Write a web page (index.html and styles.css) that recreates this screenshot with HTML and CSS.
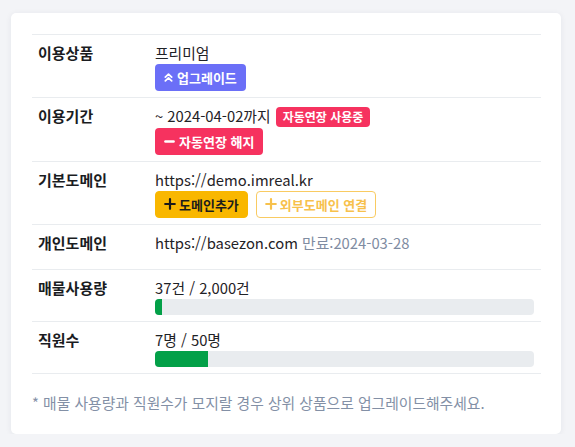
FILE: index.html
```html
<!DOCTYPE html>
<html lang="ko">
<head>
<meta charset="utf-8">
<link rel="stylesheet" href="styles.css">
</head>
<body>
<div class="card">
  <div class="table">
    <div class="row">
      <div class="label">이용상품</div>
      <div class="value">
        <div class="line">프리미엄</div>
        <button class="btn btn-indigo">
          <svg class="ico" viewBox="0 0 10 10" width="9" height="9"><path d="M1.5 4.5 5 1.3 8.5 4.5M1.5 8.7 5 5.5 8.5 8.7" fill="none" stroke="#fff" stroke-width="2" stroke-linecap="round" stroke-linejoin="round"/></svg>
          업그레이드
        </button>
      </div>
    </div>
    <div class="row">
      <div class="label">이용기간</div>
      <div class="value">
        <div class="line">~ 2024-04-02까지 <span class="badge">자동연장 사용중</span></div>
        <button class="btn btn-pink">
          <svg class="ico" viewBox="0 0 12 12" width="11" height="11"><path d="M1.5 6h9" stroke="#fff" stroke-width="2.6" stroke-linecap="round"/></svg>
          자동연장 해지
        </button>
      </div>
    </div>
    <div class="row">
      <div class="label">기본도메인</div>
      <div class="value">
        <div class="line">https://demo.imreal.kr</div>
        <div class="btns">
          <button class="btn btn-yellow tight">
            <svg class="ico" viewBox="0 0 12 12" width="12" height="12"><path d="M6 1.2v9.6M1.2 6h9.6" stroke="#1a1a1a" stroke-width="2.2" stroke-linecap="round"/></svg>
            도메인추가
          </button>
          <button class="btn btn-outline tight">
            <svg class="ico" viewBox="0 0 12 12" width="12" height="12"><path d="M6 1.2v9.6M1.2 6h9.6" stroke="#f7c14c" stroke-width="2.2" stroke-linecap="round"/></svg>
            외부도메인 연결
          </button>
        </div>
      </div>
    </div>
    <div class="row">
      <div class="label">개인도메인</div>
      <div class="value">
        <div class="line">https://basezon.com <span class="muted">만료:2024-03-28</span></div>
      </div>
    </div>
    <div class="row">
      <div class="label">매물사용량</div>
      <div class="value">
        <div class="line">37건 / 2,000건</div>
        <div class="progress"><div class="bar" style="width:1.85%"></div></div>
      </div>
    </div>
    <div class="row">
      <div class="label">직원수</div>
      <div class="value">
        <div class="line">7명 / 50명</div>
        <div class="progress"><div class="bar" style="width:14%"></div></div>
      </div>
    </div>
  </div>
  <p class="note">* 매물 사용량과 직원수가 모지랄 경우 상위 상품으로 업그레이드해주세요.</p>
</div>
</body>
</html>
```
FILE: styles.css
```css
* { box-sizing: border-box; }
html, body { margin: 0; padding: 0; }
body {
  background: #f3f4f7;
  font-family: "Noto Sans CJK KR", "Noto Sans", sans-serif;
  font-size: 14.8px;
  color: #1f2226;
  padding: 13px 14px 0 11px;
}
.card {
  background: #fff;
  border-radius: 5px;
  box-shadow: 0 1px 6px rgba(30, 40, 70, 0.07);
  padding: 21px 20px 20px 21px;
  width: 550px;
}
.table { border-top: 1px solid #e9ecef; }
.row {
  display: grid;
  grid-template-columns: 123px 1fr;
  border-bottom: 1px solid #e9ecef;
  min-height: 45px;
}
.label {
  padding: 7px 0 6px 6px;
  font-weight: 700;
  font-size: 15px;
  line-height: 22px;
  color: #1a1c1f;
}
.value {
  padding: 7px 7px 6px 0;
  line-height: 22px;
}
.line { line-height: 22px; }
.muted { color: #7f8ca2; }
.badge {
  display: inline-block;
  vertical-align: middle;
  background: #f6325f;
  color: #fff;
  font-size: 12px;
  font-weight: 700;
  line-height: 20px;
  height: 20px;
  padding: 0 7px;
  border-radius: 4px;
  margin-left: 1px;
  position: relative;
  top: -1px;
}
.btns { display: flex; gap: 8px; }
.btn {
  display: inline-flex;
  align-items: center;
  gap: 4px;
  height: 27px;
  padding: 0 8px;
  border: 1px solid transparent;
  border-radius: 4px;
  font-family: inherit;
  font-size: 13px;
  font-weight: 700;
  cursor: pointer;
}
.btn.tight { gap: 3px; padding: 0 8px; }
.ico { display: block; flex: none; }
.btn-indigo { background: #6b6ff7; color: #fff; }
.btn-pink { background: #f6325f; color: #fff; }
.btn-yellow { background: #f9b700; color: #1c1c1c; border-color: #f9b700; }
.btn-outline { background: #fff; color: #f7c14c; border-color: #f9cb62; }
.progress {
  height: 16px;
  background: #e9ecef;
  border-radius: 4px;
  overflow: hidden;
}
.bar { height: 100%; background: #03a048; }
.note {
  margin: 18px 0 0;
  line-height: 22px;
  color: #8390a6;
}
```
